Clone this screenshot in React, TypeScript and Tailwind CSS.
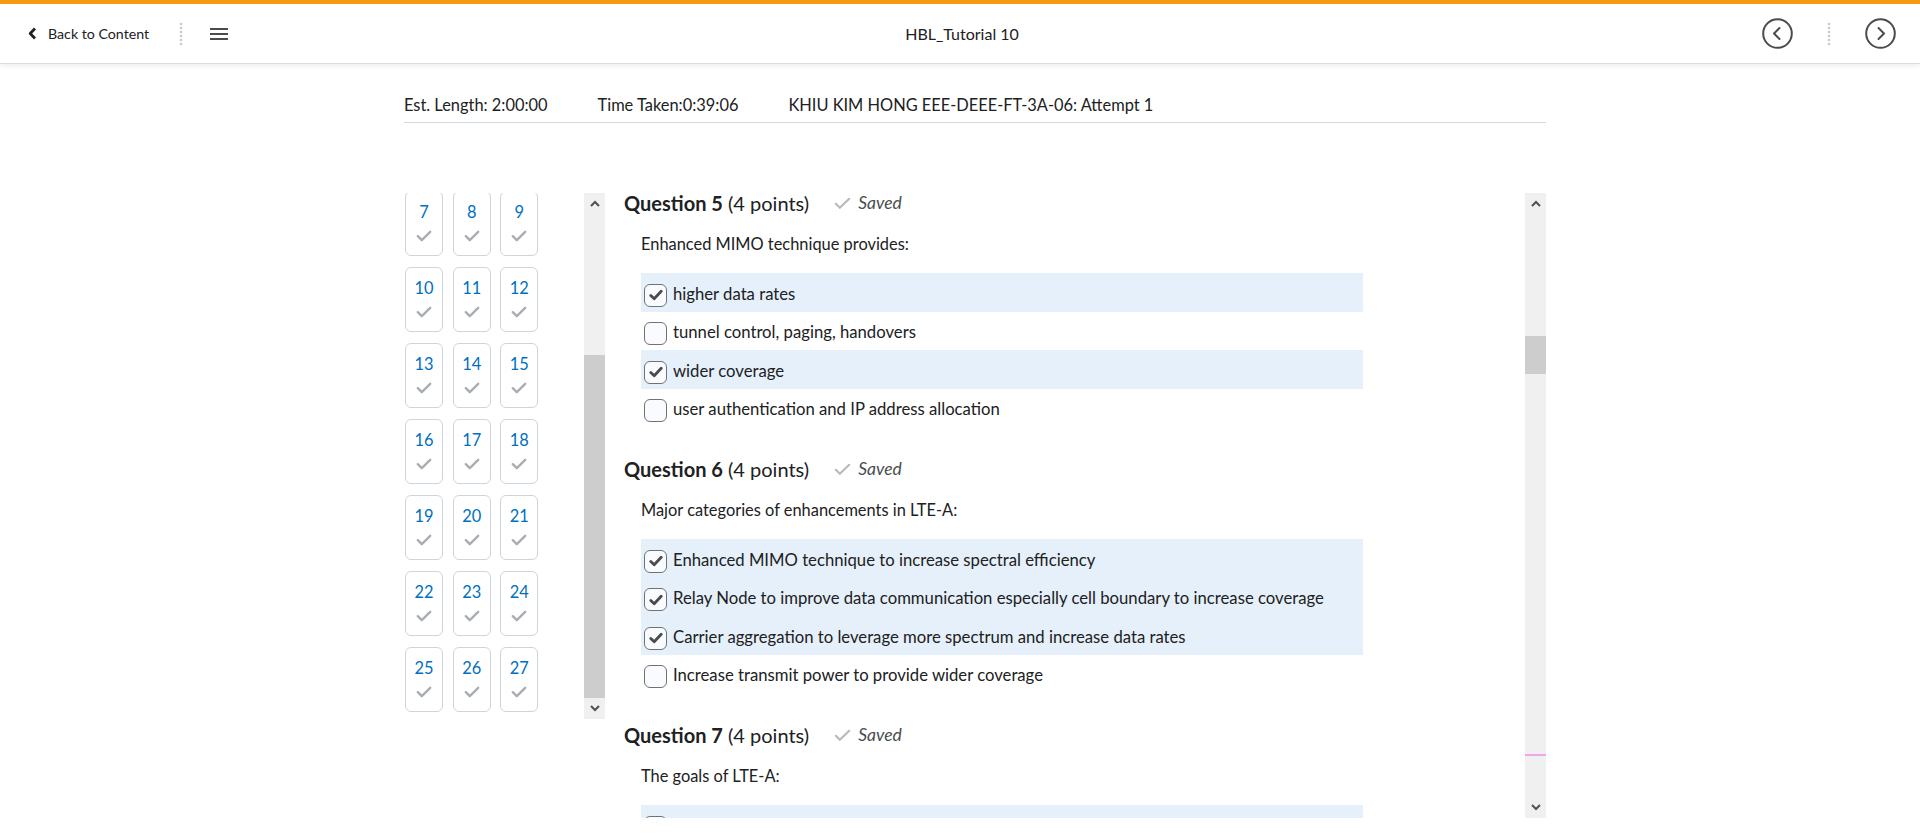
import React from "react";

type Option = { text: string; checked: boolean };
type Question = { num: number; prompt: string; options: Option[] };

const questions: Question[] = [
  {
    num: 5,
    prompt: "Enhanced MIMO technique provides:",
    options: [
      { text: "higher data rates", checked: true },
      { text: "tunnel control, paging, handovers", checked: false },
      { text: "wider coverage", checked: true },
      { text: "user authentication and IP address allocation", checked: false },
    ],
  },
  {
    num: 6,
    prompt: "Major categories of enhancements in LTE-A:",
    options: [
      { text: "Enhanced MIMO technique to increase spectral efficiency", checked: true },
      {
        text: "Relay Node to improve data communication especially cell boundary to increase coverage",
        checked: true,
      },
      { text: "Carrier aggregation to leverage more spectrum and increase data rates", checked: true },
      { text: "Increase transmit power to provide wider coverage", checked: false },
    ],
  },
  {
    num: 7,
    prompt: "The goals of LTE-A:",
    options: [
      { text: "Increase peak data rate", checked: true },
      { text: "Higher spectral efficiency", checked: true },
    ],
  },
];

function Dots() {
  return (
    <svg width="4" height="24" viewBox="0 0 4 24" className="shrink-0">
      {[2, 6, 10, 14, 18, 22].map((y) => (
        <circle key={y} cx="2" cy={y} r="1.3" fill="#c6cbd0" />
      ))}
    </svg>
  );
}

function TileCheck() {
  return (
    <svg width="16" height="12" viewBox="0 0 16 12" fill="none">
      <path d="M1.8 6.2l4 4L14.2 1.8" stroke="#a9aeb3" strokeWidth="2.4" strokeLinecap="round" strokeLinejoin="round" />
    </svg>
  );
}

function SavedCheck() {
  return (
    <svg width="17" height="13" viewBox="0 0 17 13" fill="none">
      <path d="M1.8 6.8l4 4L15.2 1.8" stroke="#b6bbc0" strokeWidth="2.2" strokeLinecap="round" strokeLinejoin="round" />
    </svg>
  );
}

function CircleNav({ dir }: { dir: "left" | "right" }) {
  return (
    <svg width="31" height="31" viewBox="0 0 31 31" fill="none">
      <circle cx="15.5" cy="15.5" r="14.3" stroke="#494c4e" strokeWidth="2" />
      <path
        d={dir === "left" ? "M17.5 10l-5.5 5.5 5.5 5.5" : "M13.5 10l5.5 5.5-5.5 5.5"}
        stroke="#494c4e"
        strokeWidth="2"
        strokeLinecap="round"
        strokeLinejoin="round"
      />
    </svg>
  );
}

function Arrow({ up }: { up: boolean }) {
  return (
    <svg width="10" height="7" viewBox="0 0 10 7" fill="none">
      <path d={up ? "M1 6l4-4 4 4" : "M1 1l4 4 4-4"} stroke="#505050" strokeWidth="2" />
    </svg>
  );
}

function Checkbox({ checked }: { checked: boolean }) {
  return (
    <div className="flex h-[23px] w-[23px] shrink-0 items-center justify-center rounded-[6px] border border-[#6e7376] bg-[#f9fbff]">
      {checked && (
        <svg width="14" height="12" viewBox="0 0 14 12" fill="none">
          <path d="M1.8 6.4l3.4 3.3L12.2 2.2" stroke="#494c4e" strokeWidth="2.8" strokeLinecap="round" strokeLinejoin="round" />
        </svg>
      )}
    </div>
  );
}

function QuestionBlock({ q, first }: { q: Question; first?: boolean }) {
  return (
    <section className={first ? "" : "mt-[32px]"}>
      <div className="flex items-center leading-[20px]">
        <h2 className="text-[20px] text-[#202122]">
          <span className="font-bold">Question {q.num}</span> (4 points)
        </h2>
        <div className="ml-[25px] flex items-center gap-[7px] text-[17.5px] italic text-[#494c4e]">
          <SavedCheck />
          <span>Saved</span>
        </div>
      </div>
      <p className="ml-[17px] mt-[19px] text-[16.4px] leading-[24px] text-[#202122]">{q.prompt}</p>
      <div className="ml-[17px] mt-[17px] w-[722px]">
        {q.options.map((o) => (
          <div
            key={o.text}
            className={`flex h-[38.5px] items-center gap-[6px] pl-[3px] pt-[4px] ${o.checked ? "bg-[#e6f0fa]" : ""}`}
          >
            <div className="mt-[2px]">
              <Checkbox checked={o.checked} />
            </div>
            <span className="text-[16.7px] text-[#202122]">{o.text}</span>
          </div>
        ))}
      </div>
    </section>
  );
}

export default function App() {
  const tiles = Array.from({ length: 21 }, (_, i) => i + 7);
  return (
    <div className="h-[838px] overflow-hidden bg-white font-['Lato',sans-serif] text-[#202122]">
      <header className="border-t-4 border-[#f49a0e] border-b border-b-[#d9dde1] shadow-[0_2px_5px_rgba(0,0,0,0.07)]">
        <div className="flex h-[59px] items-center">
          <div className="flex flex-1 items-center pl-[28px]">
            <svg width="9" height="13" viewBox="0 0 9 13" fill="none">
              <path d="M7 1.5L2.2 6.5 7 11.5" stroke="#202122" strokeWidth="2.8" strokeLinejoin="round" />
            </svg>
            <span className="ml-[11px] text-[14.2px] text-[#202122]">Back to Content</span>
            <div className="ml-[30px]">
              <Dots />
            </div>
            <svg className="ml-[27px]" width="18" height="14" viewBox="0 0 18 14" fill="none">
              <path d="M0 2h18M0 7h18M0 12h18" stroke="#494c4e" strokeWidth="2" />
            </svg>
          </div>
          <div className="text-[16px] text-[#202122]">HBL_Tutorial 10</div>
          <div className="flex flex-1 items-center justify-end gap-[34px] pr-[24px]">
            <CircleNav dir="left" />
            <Dots />
            <CircleNav dir="right" />
          </div>
        </div>
      </header>

      <div className="ml-[404px] w-[1142px]">
        <div className="flex gap-[50px] border-b border-[#d3d9e3] pb-[5px] pt-[29px] text-[16.4px] leading-[24px] text-[#202122]">
          <span>Est. Length: 2:00:00</span>
          <span>Time Taken:0:39:06</span>
          <span>KHIU KIM HONG EEE-DEEE-FT-3A-06: Attempt 1</span>
        </div>

        <div className="mt-[70px] flex">
          <div className="flex h-[526px] w-[201px]">
            <div className="w-[180px] overflow-hidden">
              <div className="-mt-[2px] grid w-[134px] grid-cols-3 gap-x-[10px] gap-y-[11px] pl-[1px]">
                {tiles.map((n) => (
                  <div
                    key={n}
                    className="flex h-[65px] w-[38px] flex-col items-center rounded-[6px] border border-[#cdd5dc] pt-[9px]"
                  >
                    <span className="text-[16.4px] leading-[22px] text-[#006fbf]">{n}</span>
                    <div className="mt-[7px]">
                      <TileCheck />
                    </div>
                  </div>
                ))}
              </div>
            </div>
            <div className="flex w-[21px] flex-col bg-[#f0f0f0]">
              <div className="flex h-[21px] items-center justify-center">
                <Arrow up />
              </div>
              <div className="relative flex-1">
                <div className="absolute left-0 right-0 top-[141px] bottom-0 bg-[#cdcdcd]" />
              </div>
              <div className="flex h-[21px] items-center justify-center">
                <Arrow up={false} />
              </div>
            </div>
          </div>

          <div className="flex h-[625px] flex-1">
            <div className="flex-1 overflow-hidden pl-[19px]">
              {questions.map((q, i) => (
                <QuestionBlock key={q.num} q={q} first={i === 0} />
              ))}
            </div>
            <div className="flex w-[21px] flex-col bg-[#f0f0f0]">
              <div className="flex h-[21px] items-center justify-center">
                <Arrow up />
              </div>
              <div className="relative flex-1">
                <div className="absolute left-0 right-0 top-[122px] h-[38px] bg-[#cdcdcd]" />
                <div className="absolute left-0 right-0 top-[540px] h-[2px] bg-[#f0a6ee]" />
              </div>
              <div className="flex h-[21px] items-center justify-center">
                <Arrow up={false} />
              </div>
            </div>
          </div>
        </div>
      </div>
    </div>
  );
}
